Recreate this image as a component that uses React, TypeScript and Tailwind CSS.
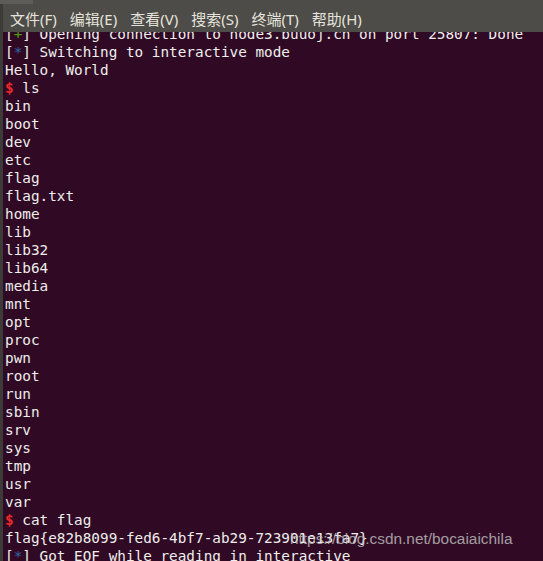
import React from 'react'

const menus = ['文件(F)', '编辑(E)', '查看(V)', '搜索(S)', '终端(T)', '帮助(H)']

const files = [
	'bin', 'boot', 'dev', 'etc', 'flag', 'flag.txt', 'home', 'lib', 'lib32', 'lib64', 'media',
	'mnt', 'opt', 'proc', 'pwn', 'root', 'run', 'sbin', 'srv', 'sys', 'tmp', 'usr', 'var',
]

const Tag = (props: { mark: string, color: string }) => (
	<span>[<span className={props.color}>{props.mark}</span>]</span>
)

const Prompt = (props: { cmd: string }) => (
	<div>
		<span className="text-[#ef2929] font-bold">$</span> {props.cmd}
	</div>
)

export default function App() {
	return (
		<div className="w-[543px] h-[561px] overflow-hidden flex bg-[#300a24]">
			<div className="w-[3px] shrink-0 bg-[#3c3b37]"/>
			<div className="flex-1 flex flex-col min-w-0 relative">
				<div className="h-[32px] shrink-0 bg-[#4d4c48] flex items-center pt-[6px] pl-[7px] gap-[13px] text-[15px] leading-[20px] text-[#e6e3dc] relative font-['Noto_Sans','Noto_Sans_CJK_SC',sans-serif]">
					<div className="absolute left-[-3px] top-0 w-[33px] h-[4px] bg-[#5d5c58]"/>
					{menus.map(m => <span key={m}>{m}</span>)}
				</div>
				<div className="flex-1 overflow-hidden">
					<div className="mt-[-7px] pl-[2px] text-[14.35px] leading-[18px] text-[#eeeeec] whitespace-pre font-['DejaVu_Sans_Mono',monospace]">
						<div><Tag mark="+" color="text-[#4e9a06]"/> Opening connection to node3.buuoj.cn on port 25807: Done</div>
						<div><Tag mark="*" color="text-[#3465a4]"/> Switching to interactive mode</div>
						<div>Hello, World</div>
						<Prompt cmd="ls"/>
						{files.map(f => <div key={f}>{f}</div>)}
						<Prompt cmd="cat flag"/>
						<div>flag{'{'}e82b8099-fed6-4bf7-ab29-723901e13fa7{'}'}</div>
						<div><Tag mark="*" color="text-[#3465a4]"/> Got EOF while reading in interactive</div>
					</div>
				</div>
				<div className="absolute left-[287px] top-[530px] text-[15.4px] leading-[18px] text-[#c4c4c4]/80 font-['Liberation_Sans',sans-serif]">
					https://blog.csdn.net/bocaiaichila
				</div>
			</div>
		</div>
	)
}
